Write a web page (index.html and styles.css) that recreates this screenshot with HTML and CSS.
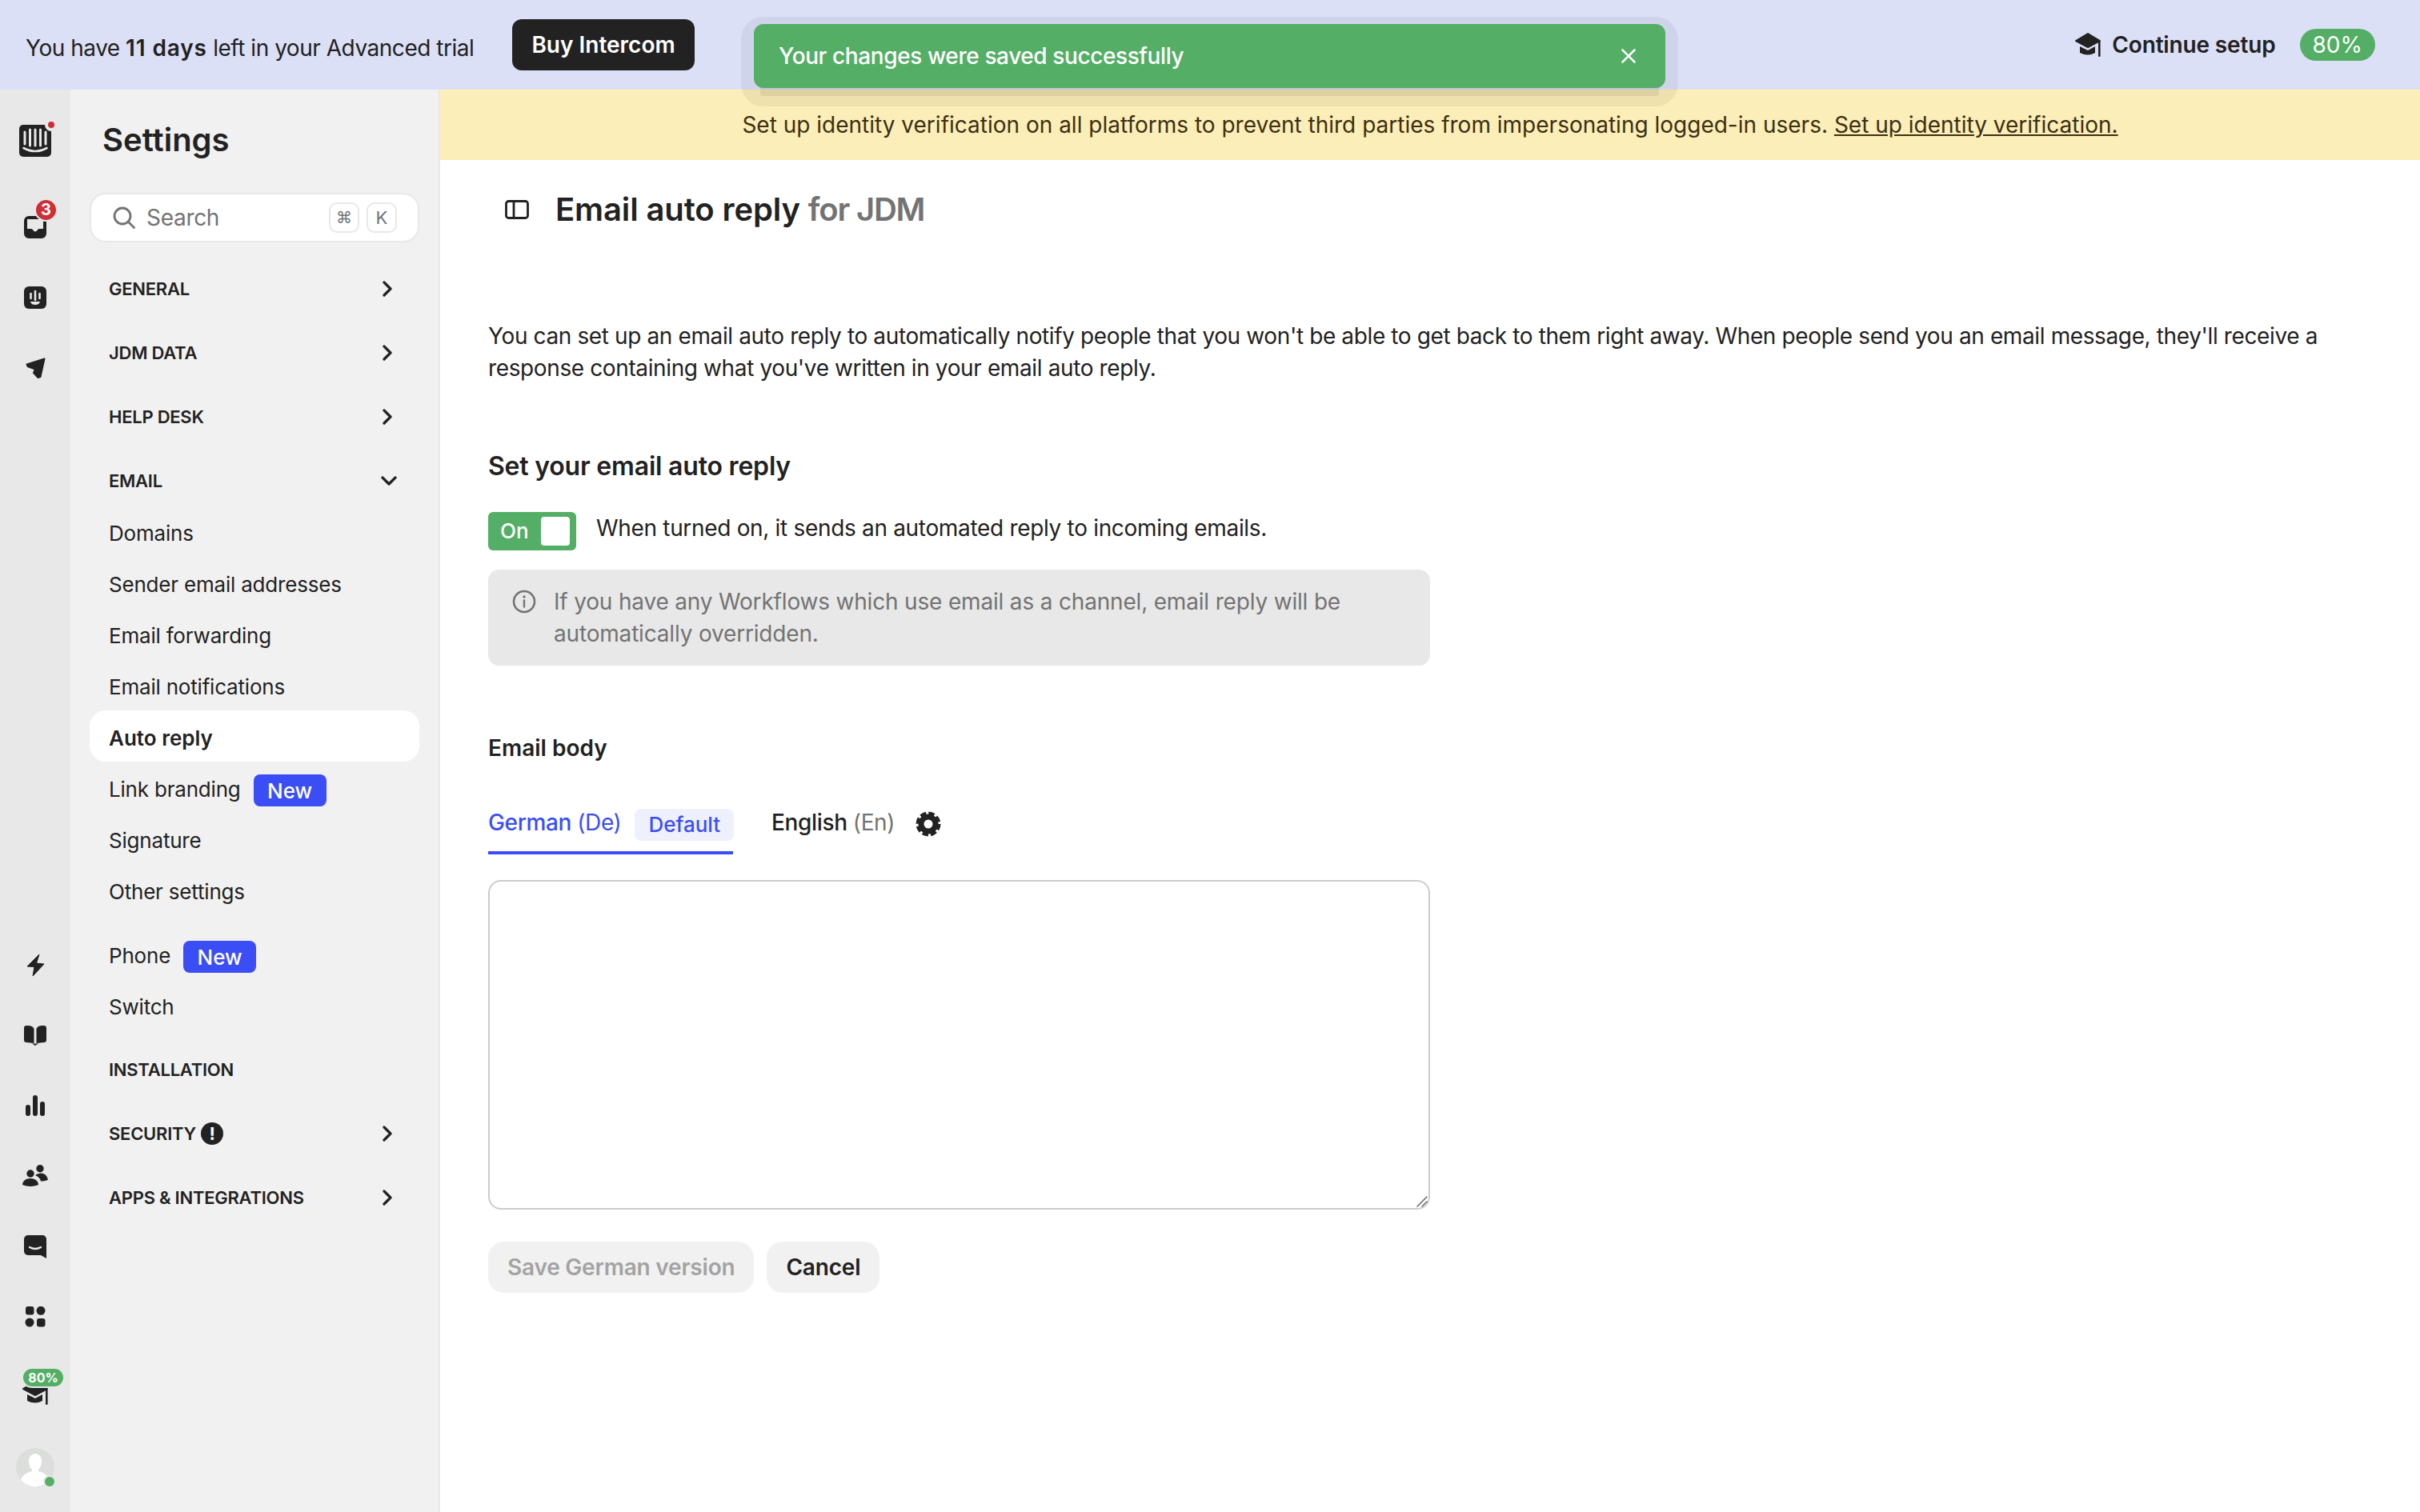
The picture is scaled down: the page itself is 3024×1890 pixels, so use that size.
FILE: index.html
```html
<!DOCTYPE html>
<html lang="en">
<head>
  <meta charset="UTF-8" />
  <title>Email auto reply</title>
  <link rel="stylesheet" href="styles.css">
</head>
<body>
  <div class="app">
    <header class="topbar">
      <div class="trial">
        <span class="trial-text">You have <b>11 days</b> left in your Advanced trial</span>
        <button class="buy">Buy Intercom</button>
      </div>
      <div class="toast">
        <span>Your changes were saved successfully</span>
        <svg width="20" height="20" viewBox="0 0 20 20"><path d="M2.500 2.500l15 15M17.500 2.500l-15 15" stroke="#fff" stroke-width="2.600" stroke-linecap="round"/></svg>
      </div>
      <div class="setup">
        <svg width="32" height="30" viewBox="0 0 32 30"><path d="M16 1L1 10l15 8 15-8z" fill="#222" stroke="#222" stroke-width="2" stroke-linejoin="round"/><path d="M6 17l10 5 9-5v8q-9 5-19 0z" fill="#222"/><rect x="29" y="10" width="2.600" height="20" rx="1.300" fill="#222"/></svg>
        <span class="setup-label">Continue setup</span>
        <span class="setup-pct">80%</span>
      </div>
    </header>

    <div class="body">
      <nav class="rail">
        <div class="rail-group">
          <div class="rail-item rail-logo">
            <svg width="40" height="40" viewBox="0 0 40 40" overflow="visible">
              <rect width="40" height="40" rx="5" fill="#222"/>
              <path d="M7 9v15M13.500 6v20M20 6v20M26.500 6v20M33 9v15" stroke="#e8e8e8" stroke-width="3" stroke-linecap="round"/>
              <path d="M5.500 29q14.500 8 29 0" fill="none" stroke="#e8e8e8" stroke-width="2.600" stroke-linecap="round"/>
              <circle cx="40" cy="0" r="8" fill="#e8e8e8"/><circle cx="40" cy="0" r="4" fill="#cf2e36"/>
            </svg>
          </div>
          <div class="rail-item">
            <svg width="28" height="28" viewBox="0 0 28 28"><path fill-rule="evenodd" d="M6 0h16a6 6 0 0 1 6 6v16a6 6 0 0 1-6 6H6a6 6 0 0 1-6-6V6a6 6 0 0 1 6-6zM4 4v12h5q2 0 3 2.500 2 2 4 0 1-2.500 3-2.500h5V4z" fill="#222"/></svg>
            <span class="rail-count">3</span>
          </div>
          <div class="rail-item">
            <svg width="28" height="28" viewBox="0 0 28 28"><rect width="28" height="28" rx="6" fill="#222"/><path d="M8.500 9v6M14 6v11M19.500 9v6" stroke="#e8e8e8" stroke-width="2.600" stroke-linecap="round"/><path d="M8 19h12q-1 4-6 4t-6-4z" fill="#e8e8e8"/></svg>
          </div>
          <div class="rail-item">
            <svg width="26" height="26" viewBox="0 0 26 26"><path d="M24.500 1.500L2.500 8.500l1 2.500 9.500 3.500-2 4.500 5.500 6 3-1z" fill="#222" stroke="#222" stroke-width="2" stroke-linejoin="round"/></svg>
          </div>
        </div>
        <div class="rail-group">
          <div class="rail-item">
            <svg width="23" height="29" viewBox="0 0 23 29"><path d="M16 1L1 16l9 .5L8 28 22 13l-9.500-1z" fill="#222" stroke="#222" stroke-width="1" stroke-linejoin="round"/></svg>
          </div>
          <div class="rail-item">
            <svg width="28" height="25" viewBox="0 0 28 25"><path d="M0 3q0-3 3-3h2q6 0 7.500 4v18L3 21q-3 0-3-3zM28 3q0-3-3-3h-2q-6 0-7.500 4v18l9.500-1q3 0 3-3zM10 22.500h8L14 25z" fill="#222"/></svg>
          </div>
          <div class="rail-item">
            <svg width="24" height="26" viewBox="0 0 24 26"><rect y="12" width="6" height="14" rx="3" fill="#222"/><rect x="9" width="6" height="26" rx="3" fill="#222"/><rect x="18" y="8" width="6" height="18" rx="3" fill="#222"/></svg>
          </div>
          <div class="rail-item">
            <svg width="32" height="28" viewBox="0 0 32 28"><circle cx="10" cy="11" r="4.700" fill="#222"/><circle cx="22" cy="4.700" r="4.700" fill="#222"/><path d="M0 25q1-8 10-8t10 8q-10 4-20 0z" fill="#222"/><path d="M16 13q3-2.500 7-2.500 7 0 9 8-3 2-9 2-1-5-7-7.500z" fill="#222"/></svg>
          </div>
          <div class="rail-item">
            <svg width="28" height="29" viewBox="0 0 28 29"><path d="M5 0h18a5 5 0 0 1 5 5v24l-7-4H5a5 5 0 0 1-5-5V5a5 5 0 0 1 5-5z" fill="#222"/><path d="M7 15q7 4 14 0" fill="none" stroke="#e8e8e8" stroke-width="2.400" stroke-linecap="round"/></svg>
          </div>
          <div class="rail-item">
            <svg width="26" height="26" viewBox="0 0 26 26"><rect x="1" width="10.500" height="10.500" rx="3" fill="#222"/><circle cx="20" cy="5.300" r="5.500" fill="#222"/><circle cx="6" cy="20" r="5.500" fill="#222"/><rect x="15" y="15" width="10.500" height="10.500" rx="3" fill="#222"/></svg>
          </div>
          <div class="rail-item rail-cap">
            <svg width="32" height="30" viewBox="0 0 32 30"><path d="M16 1L1 10l15 8 15-8z" fill="#222" stroke="#222" stroke-width="2" stroke-linejoin="round"/><path d="M6 17l10 5 9-5v8q-9 5-19 0z" fill="#222"/><rect x="29" y="10" width="2.600" height="20" rx="1.300" fill="#222"/></svg>
            <span class="rail-pct">80%</span>
          </div>
          <div class="rail-item">
            <svg width="48" height="48" viewBox="0 0 48 48" overflow="visible">
              <circle cx="24" cy="24" r="24" fill="#dcdedc"/>
              <path d="M16 16a8 9 0 0 1 16 0q0 7-4 11v2q12 3 14 11a24 24 0 0 1-36 0q2-8 14-11v-2q-4-4-4-11z" fill="#fff"/>
              <circle cx="42" cy="42" r="8" fill="#e8e8e8"/><circle cx="42" cy="42" r="6" fill="#54ae66"/>
            </svg>
          </div>
        </div>
      </nav>

      <aside class="sidebar">
        <h1 class="sidebar-title">Settings</h1>
        <div class="search">
          <svg width="28" height="28" viewBox="0 0 28 28"><circle cx="12" cy="12" r="10" fill="none" stroke="#737373" stroke-width="2.800"/><path d="M19.500 19.500l7 7" stroke="#737373" stroke-width="2.800" stroke-linecap="round"/></svg>
          <span class="search-text">Search</span>
          <kbd class="key key-cmd">⌘</kbd>
          <kbd class="key">K</kbd>
        </div>
        <div class="nav">
          <a class="nav-head">General <svg class="chev" width="12" height="20" viewBox="0 0 12 20"><path d="M2 2l8 8-8 8" fill="none" stroke="#222" stroke-width="3.200" stroke-linecap="round" stroke-linejoin="round"/></svg></a>
          <a class="nav-head">JDM Data <svg class="chev" width="12" height="20" viewBox="0 0 12 20"><path d="M2 2l8 8-8 8" fill="none" stroke="#222" stroke-width="3.200" stroke-linecap="round" stroke-linejoin="round"/></svg></a>
          <a class="nav-head">Help Desk <svg class="chev" width="12" height="20" viewBox="0 0 12 20"><path d="M2 2l8 8-8 8" fill="none" stroke="#222" stroke-width="3.200" stroke-linecap="round" stroke-linejoin="round"/></svg></a>
          <a class="nav-head">Email <svg class="chev chev-down" width="20" height="12" viewBox="0 0 20 12"><path d="M2 2l8 8 8-8" fill="none" stroke="#222" stroke-width="3.200" stroke-linecap="round" stroke-linejoin="round"/></svg></a>
          <div class="nav-sub">
            <a class="nav-item">Domains</a>
            <a class="nav-item">Sender email addresses</a>
            <a class="nav-item">Email forwarding</a>
            <a class="nav-item">Email notifications</a>
            <a class="nav-item active">Auto reply</a>
            <a class="nav-item">Link branding <span class="tag">New</span></a>
            <a class="nav-item">Signature</a>
            <a class="nav-item">Other settings</a>
          </div>
          <div class="nav-sub nav-sub-2">
            <a class="nav-item">Phone <span class="tag">New</span></a>
            <a class="nav-item">Switch</a>
          </div>
          <a class="nav-head nav-head-gap">Installation</a>
          <a class="nav-head"><span class="nav-head-label">Security <span class="alert">!</span></span> <svg class="chev" width="12" height="20" viewBox="0 0 12 20"><path d="M2 2l8 8-8 8" fill="none" stroke="#222" stroke-width="3.200" stroke-linecap="round" stroke-linejoin="round"/></svg></a>
          <a class="nav-head">Apps &amp; Integrations <svg class="chev" width="12" height="20" viewBox="0 0 12 20"><path d="M2 2l8 8-8 8" fill="none" stroke="#222" stroke-width="3.200" stroke-linecap="round" stroke-linejoin="round"/></svg></a>
        </div>
      </aside>

      <main class="main">
        <div class="banner">Set up identity verification on all platforms to prevent third parties from impersonating logged-in users.&nbsp;<a>Set up identity verification.</a></div>
        <div class="content">
          <div class="page-title">
            <svg width="30" height="24" viewBox="0 0 30 24"><rect x="1.500" y="1.500" width="27" height="21" rx="3" fill="none" stroke="#222" stroke-width="2.800"/><path d="M11 2v20" stroke="#222" stroke-width="2.800"/></svg>
            <h2>Email auto reply <span>for JDM</span></h2>
          </div>
          <p class="intro">You can set up an email auto reply to automatically notify people that you won't be able to get back to them right away. When people send you an email message, they'll receive a response containing what you've written in your email auto reply.</p>
          <h3 class="section-title">Set your email auto reply</h3>
          <div class="form">
            <div class="toggle-row">
              <div class="toggle"><span>On</span><i class="knob"></i></div>
              <span>When turned on, it sends an automated reply to incoming emails.</span>
            </div>
            <div class="info">
              <svg width="30" height="30" viewBox="0 0 30 30"><circle cx="15" cy="15" r="13" fill="none" stroke="#737373" stroke-width="2.600"/><circle cx="15" cy="9" r="1.700" fill="#737373"/><path d="M15 13.500v8" stroke="#737373" stroke-width="2.400" stroke-linecap="round"/></svg>
              <p>If you have any Workflows which use email as a channel, email reply will be automatically overridden.</p>
            </div>
            <div class="body-label">Email body</div>
            <div class="tabs">
              <div class="tab tab-active"><span class="tab-label">German <em>(De)</em></span><span class="pill">Default</span></div>
              <div class="tab"><span class="tab-label">English <em>(En)</em></span></div>
              <svg class="gear" width="32" height="32" viewBox="0 0 32 32"><circle cx="16" cy="16" r="9" fill="none" stroke="#222" stroke-width="7"/><circle cx="16" cy="16" r="13" fill="none" stroke="#222" stroke-width="5" stroke-dasharray="7.200 3"/></svg>
            </div>
            <div class="editor-wrap">
              <textarea class="editor"></textarea>
              <svg class="grip" width="16" height="16" viewBox="0 0 16 16"><path d="M15 3L3 15M15 9l-6 6" stroke="#666" stroke-width="1.500" stroke-linecap="round"/></svg>
            </div>
            <div class="actions">
              <button class="btn btn-disabled">Save German version</button>
              <button class="btn">Cancel</button>
            </div>
          </div>
        </div>
      </main>
    </div>
  </div>
</body>
</html>
```
FILE: styles.css
```css
* {
  box-sizing: border-box;
}

body {
  margin: 0;
  font-family: Inter, "Liberation Sans", sans-serif;
  font-size: 28px;
  line-height: 40px;
  color: #222;
  background: #fff;
}

.app {
  height: 100vh;
  display: flex;
  flex-direction: column;
  overflow: hidden;
}

/* top bar */
.topbar {
  height: 112px;
  flex: none;
  position: relative;
  display: flex;
  align-items: center;
  justify-content: space-between;
  padding: 0 56px 0 32px;
  background: #dce0f7;
}

.trial {
  display: flex;
  align-items: center;
  gap: 48px;
}

.trial-text {
  margin-top: 8px;
  letter-spacing: -0.47px;
}

.trial b {
  font-weight: 600;
  letter-spacing: 0.85px;
}

.buy {
  height: 64px;
  padding: 0 24px;
  border: none;
  border-radius: 12px;
  background: #222;
  color: #fff;
  font: 600 28px Inter, sans-serif;
}

.toast {
  position: absolute;
  left: 942px;
  top: 30px;
  z-index: 10;
  width: 1139px;
  height: 80px;
  display: flex;
  align-items: center;
  justify-content: space-between;
  padding: 0 36px 0 31px;
  border-radius: 12px;
  background: #54ae66;
  color: #fff;
  font-weight: 500;
  letter-spacing: -0.4px;
  box-shadow: 0 18px 0 -8px rgba(0, 0, 0, 0.07), 0 7px 0 16px rgba(0, 0, 0, 0.05);
}

.setup {
  display: flex;
  align-items: center;
}

.setup-label {
  margin-left: 14px;
  font-weight: 600;
  letter-spacing: -0.15px;
}

.setup-pct {
  margin-left: 30px;
  padding: 0 16px;
  height: 40px;
  border-radius: 20px;
  background: #54ae66;
  color: #fff;
}

.body {
  flex: 1;
  display: flex;
  min-height: 0;
}

/* icon rail */
.rail {
  width: 88px;
  flex: none;
  display: flex;
  flex-direction: column;
  justify-content: space-between;
  padding: 20px 0 12px;
  background: #e8e8e8;
}

.rail-item {
  position: relative;
  height: 88px;
  display: flex;
  align-items: center;
  justify-content: center;
}

.rail-logo {
  margin-bottom: 20px;
}

.rail-count {
  position: absolute;
  left: 45px;
  top: 10px;
  width: 25px;
  height: 25px;
  border-radius: 50%;
  background: #cf2e36;
  color: #fff;
  font-size: 20px;
  font-weight: 700;
  line-height: 25px;
  text-align: center;
  box-shadow: 0 0 0 2px #e8e8e8;
}

.rail-cap {
  margin-top: 12px;
  padding-bottom: 10px;
}

.rail-pct {
  position: absolute;
  left: 29px;
  top: 9px;
  width: 50px;
  height: 22px;
  border-radius: 11px;
  background: #54ae66;
  color: #fff;
  font-size: 16px;
  font-weight: 700;
  line-height: 22px;
  text-align: center;
  box-shadow: 0 0 0 2px #e8e8e8;
}

/* settings sidebar */
.sidebar {
  width: 462px;
  flex: none;
  padding: 0 24px;
  background: #f1f1f1;
  border-right: 2px solid #e8e8e8;
}

.sidebar-title {
  margin: 0;
  padding-left: 16px;
  height: 129px;
  font-size: 40px;
  font-weight: 600;
  line-height: 126px;
}

.search {
  width: 412px;
  height: 62px;
  display: flex;
  align-items: center;
  padding: 0 26px 0 27px;
  border: 2px solid #e8e8e8;
  border-radius: 20px;
  background: #fff;
  color: #737373;
}

.search-text {
  flex: 1;
  margin-left: 14px;
  letter-spacing: -0.3px;
}

.key {
  width: 38px;
  height: 38px;
  margin-left: 9px;
  border: 2px solid #e8e8e8;
  border-radius: 10px;
  color: #737373;
  font-family: Inter, sans-serif;
  font-size: 22px;
  line-height: 34px;
  text-align: center;
}

.key-cmd {
  font-family: "DejaVu Sans", sans-serif;
  font-size: 20px;
}

.nav {
  margin-top: 18px;
}

.nav-head {
  height: 80px;
  display: flex;
  align-items: center;
  justify-content: space-between;
  padding: 0 34px 0 24px;
  font-size: 22px;
  font-weight: 600;
  letter-spacing: -0.25px;
  text-transform: uppercase;
}

.nav-head-gap {
  margin-top: 9px;
}

.nav-head-label {
  display: flex;
  align-items: center;
  gap: 6px;
}

.chev-down {
  margin-right: -6px;
}

.alert {
  width: 28px;
  height: 28px;
  border-radius: 50%;
  background: #222;
  color: #fff;
  font-size: 22px;
  font-weight: 700;
  line-height: 28px;
  text-align: center;
}

.nav-sub {
  margin-top: -9px;
}

.nav-sub-2 {
  margin-top: 16px;
}

.nav-item {
  height: 64px;
  display: flex;
  align-items: center;
  gap: 16px;
  padding: 6px 24px 0;
  border-radius: 20px;
  font-size: 26px;
  letter-spacing: -0.2px;
}

.nav-item.active {
  background: #fff;
  font-weight: 600;
  letter-spacing: 0;
}

.tag {
  height: 40px;
  width: 91px;
  margin-top: 2px;
  border-radius: 8px;
  background: #3b4ef5;
  color: #fff;
  font-weight: 500;
  letter-spacing: 0;
  line-height: 42px;
  text-align: center;
}

/* main column */
.main {
  flex: 1;
  min-width: 0;
}

.banner {
  height: 88px;
  display: flex;
  align-items: center;
  justify-content: center;
  background: #fbeeb8;
  color: #3d2f11;
}

.banner a {
  text-decoration: underline;
}

.content {
  padding: 0 60px;
}

.page-title {
  height: 124px;
  display: flex;
  align-items: center;
  gap: 33px;
  padding-left: 21px;
}

.page-title h2 {
  margin: 0;
  font-size: 40px;
  font-weight: 600;
  letter-spacing: -0.12px;
}

.page-title h2 span {
  color: #737373;
  letter-spacing: -1.2px;
}

.intro {
  margin: 76px 0 0;
  letter-spacing: -0.38px;
}

.section-title {
  margin: 83px 0 0;
  font-size: 32px;
  font-weight: 600;
  line-height: 40px;
  letter-spacing: -0.2px;
}

.form {
  width: 1177px;
}

.toggle-row {
  display: flex;
  gap: 25px;
  margin-top: 37px;
  letter-spacing: -0.32px;
}

.toggle {
  width: 110px;
  height: 48px;
  display: flex;
  align-items: center;
  justify-content: space-between;
  padding: 0 8px 0 15px;
  border-radius: 6px;
  background: #54ae66;
  color: #fff;
  font-size: 26px;
  font-weight: 500;
  letter-spacing: 0;
}

.knob {
  width: 36px;
  height: 36px;
  border-radius: 4px;
  background: #fff;
}

.info {
  display: flex;
  gap: 22px;
  height: 120px;
  margin-top: 24px;
  padding: 20px 80px 20px 30px;
  border-radius: 14px;
  background: #e8e8e8;
  color: #737373;
  letter-spacing: -0.18px;
}

.info svg {
  flex: none;
  margin-top: 5px;
}

.info p {
  margin: 0;
}

.body-label {
  margin-top: 83px;
  font-weight: 600;
}

.tabs {
  display: flex;
  align-items: flex-start;
  gap: 48px;
  margin-top: 56px;
}

.tab {
  display: flex;
  align-items: flex-start;
  gap: 17px;
  height: 57px;
  font-weight: 500;
  white-space: nowrap;
  letter-spacing: -0.35px;
}

.tab-label {
  line-height: 34px;
}

.tab em {
  font-style: normal;
  font-weight: 400;
  color: #737373;
}

.tab-active {
  width: 306px;
  border-bottom: 4px solid #3b4ef5;
  color: #3b4ef5;
}

.tab-active em {
  color: #3b4ef5;
}

.pill {
  padding: 0 17px;
  height: 40px;
  border-radius: 8px;
  background: #eef0fc;
  font-size: 26px;
  letter-spacing: 0;
}

.gear {
  margin: 3px 0 0 -22px;
}

.editor-wrap {
  position: relative;
  margin-top: 32px;
}

.editor {
  display: block;
  width: 100%;
  height: 412px;
  border: 2px solid #ccc;
  border-radius: 16px;
  background: #fff;
  outline: none;
  resize: none;
}

.grip {
  position: absolute;
  right: 3px;
  bottom: 3px;
}

.actions {
  display: flex;
  gap: 16px;
  margin-top: 40px;
}

.btn {
  height: 64px;
  padding: 0 24px;
  border: none;
  border-radius: 20px;
  background: #f1f1f1;
  color: #222;
  font: 600 28px Inter, sans-serif;
  letter-spacing: -0.2px;
}

.btn-disabled {
  color: #a3a3a3;
}
```
